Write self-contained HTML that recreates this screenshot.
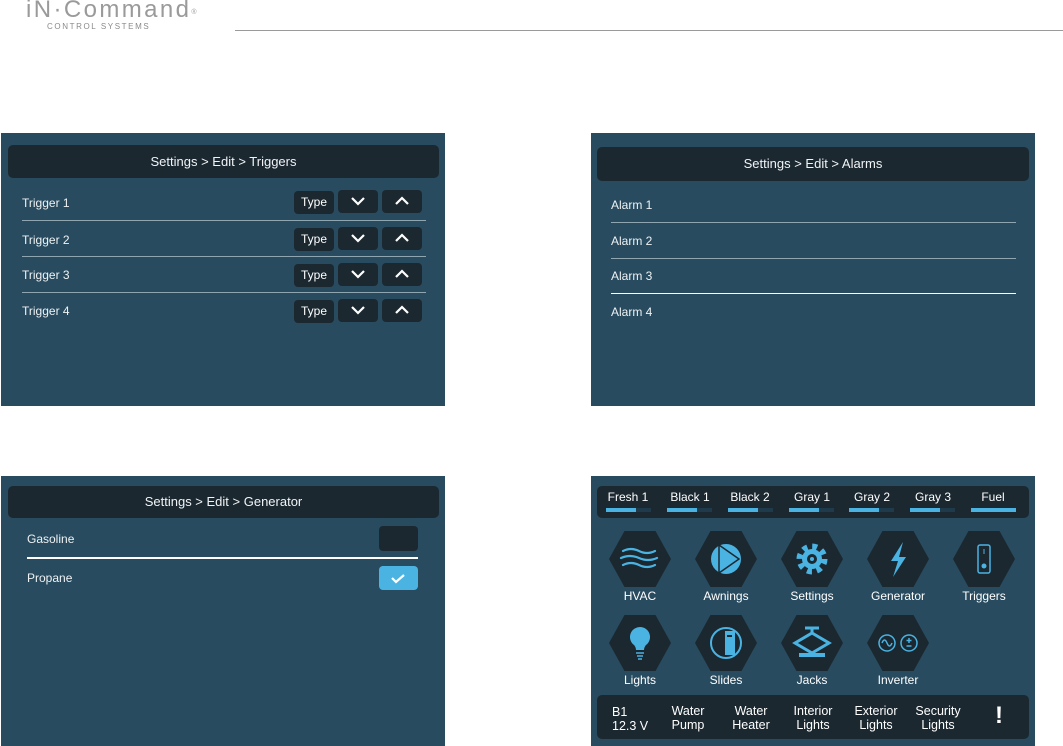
<!DOCTYPE html>
<html><head><meta charset="utf-8"><style>
*{margin:0;padding:0;box-sizing:border-box}
body{width:1063px;height:746px;background:#fff;position:relative;overflow:hidden;font-family:"Liberation Sans",sans-serif;color:#fff}
.a{position:absolute}
.p{position:absolute;background:#284b5f}
.h{position:absolute;background:#1b2830;border-radius:5px;font-size:13px;text-align:center;color:#f0f4f6}
.t{position:absolute;font-size:12px;color:#eef2f4}
.ln{position:absolute;height:1px;background:#8fa5b0}
.b{position:absolute;background:#1b2830;border-radius:4px;height:23px;font-size:12px;text-align:center;line-height:23px}
.b svg{position:absolute;left:13px;top:5px}
.hex{position:absolute;width:62px;height:56px;background:#1b2830;clip-path:polygon(25% 0,75% 0,100% 50%,75% 100%,25% 100%,0 50%)}
.lb{position:absolute;font-size:12px;text-align:center;width:80px}
.tk{position:absolute;font-size:12px;text-align:center;width:60px}
.bar{position:absolute;height:4px;width:45px;background:#1f3a4a}
.bar i{display:block;height:4px;background:#4ab3e2}
.bt{position:absolute;font-size:12.5px;line-height:14px;text-align:center;width:60px}
</style></head><body>
<div class="a" style="left:26px;top:-2px;font-size:24px;line-height:24px;color:#9a9a9a;letter-spacing:2.4px">iN·Command<sup style="font-size:7px;letter-spacing:0;vertical-align:top;position:relative;top:3px">®</sup></div>
<div class="a" style="left:47px;top:22px;font-size:8px;line-height:9px;color:#8a8a8a;letter-spacing:1.6px">CONTROL SYSTEMS</div>
<div class="a" style="left:235px;top:30px;width:828px;height:1px;background:#9a9a9a"></div>

<!-- P1 -->
<div class="p" style="left:1px;top:133px;width:444px;height:273px"></div>
<div class="h" style="left:8px;top:145px;width:431px;height:33px;line-height:33px">Settings &gt; Edit &gt; Triggers</div>
<div class="t" style="left:22px;top:196px">Trigger 1</div>
<div class="t" style="left:22px;top:233px">Trigger 2</div>
<div class="t" style="left:22px;top:268px">Trigger 3</div>
<div class="t" style="left:22px;top:304px">Trigger 4</div>
<div class="ln" style="left:22px;top:220px;width:404px"></div>
<div class="ln" style="left:22px;top:256px;width:404px"></div>
<div class="ln" style="left:22px;top:292px;width:404px"></div>

<div class="b" style="left:294px;top:191px;width:40px">Type</div>
<div class="b" style="left:338px;top:190px;width:40px"><svg width="14" height="12"><path d="M1 3l6 6 6-6" stroke="#fff" stroke-width="2.2" fill="none"/></svg></div>
<div class="b" style="left:382px;top:190px;width:40px"><svg width="14" height="12"><path d="M1 9l6-6 6 6" stroke="#fff" stroke-width="2.2" fill="none"/></svg></div>
<div class="b" style="left:294px;top:228px;width:40px">Type</div>
<div class="b" style="left:338px;top:227px;width:40px"><svg width="14" height="12"><path d="M1 3l6 6 6-6" stroke="#fff" stroke-width="2.2" fill="none"/></svg></div>
<div class="b" style="left:382px;top:227px;width:40px"><svg width="14" height="12"><path d="M1 9l6-6 6 6" stroke="#fff" stroke-width="2.2" fill="none"/></svg></div>
<div class="b" style="left:294px;top:264px;width:40px">Type</div>
<div class="b" style="left:338px;top:263px;width:40px"><svg width="14" height="12"><path d="M1 3l6 6 6-6" stroke="#fff" stroke-width="2.2" fill="none"/></svg></div>
<div class="b" style="left:382px;top:263px;width:40px"><svg width="14" height="12"><path d="M1 9l6-6 6 6" stroke="#fff" stroke-width="2.2" fill="none"/></svg></div>
<div class="b" style="left:294px;top:300px;width:40px">Type</div>
<div class="b" style="left:338px;top:299px;width:40px"><svg width="14" height="12"><path d="M1 3l6 6 6-6" stroke="#fff" stroke-width="2.2" fill="none"/></svg></div>
<div class="b" style="left:382px;top:299px;width:40px"><svg width="14" height="12"><path d="M1 9l6-6 6 6" stroke="#fff" stroke-width="2.2" fill="none"/></svg></div>

<!-- P2 -->
<div class="p" style="left:591px;top:133px;width:444px;height:273px"></div>
<div class="h" style="left:597px;top:147px;width:432px;height:34px;line-height:34px">Settings &gt; Edit &gt; Alarms</div>
<div class="t" style="left:611px;top:198px">Alarm 1</div>
<div class="t" style="left:611px;top:234px">Alarm 2</div>
<div class="t" style="left:611px;top:269px">Alarm 3</div>
<div class="t" style="left:611px;top:305px">Alarm 4</div>
<div class="ln" style="left:611px;top:222px;width:405px"></div>
<div class="ln" style="left:611px;top:258px;width:405px"></div>
<div class="ln" style="left:611px;top:293px;width:405px;background:#fff"></div>

<!-- P3 -->
<div class="p" style="left:1px;top:476px;width:444px;height:270px"></div>
<div class="h" style="left:8px;top:486px;width:431px;height:32px;line-height:32px">Settings &gt; Edit &gt; Generator</div>
<div class="t" style="left:27px;top:532px">Gasoline</div>
<div class="t" style="left:27px;top:571px">Propane</div>
<div class="a" style="left:379px;top:526px;width:39px;height:25px;background:#1b2830;border-radius:4px"></div>
<div class="a" style="left:27px;top:557px;width:391px;height:2px;background:#fff"></div>
<div class="a" style="left:379px;top:566px;width:39px;height:24px;background:#4ab3e2;border-radius:4px"><svg width="39" height="24"><path d="M13 12l4 4 8-7" stroke="#fff" stroke-width="2.2" fill="none"/></svg></div>

<!-- P4 -->
<div class="p" style="left:591px;top:476px;width:444px;height:270px"></div>
<div class="a" style="left:597px;top:486px;width:432px;height:32px;background:#1b2830;border-radius:5px"></div>
<div class="tk" style="left:598px;top:490px">Fresh 1</div><div class="bar" style="left:606px;top:508px"><i style="width:30px"></i></div>
<div class="tk" style="left:660px;top:490px">Black 1</div><div class="bar" style="left:667px;top:508px"><i style="width:30px"></i></div>
<div class="tk" style="left:720px;top:490px">Black 2</div><div class="bar" style="left:728px;top:508px"><i style="width:30px"></i></div>
<div class="tk" style="left:782px;top:490px">Gray 1</div><div class="bar" style="left:789px;top:508px"><i style="width:30px"></i></div>
<div class="tk" style="left:842px;top:490px">Gray 2</div><div class="bar" style="left:849px;top:508px"><i style="width:30px"></i></div>
<div class="tk" style="left:903px;top:490px">Gray 3</div><div class="bar" style="left:910px;top:508px"><i style="width:30px"></i></div>
<div class="tk" style="left:963px;top:490px">Fuel</div><div class="bar" style="left:971px;top:508px"><i style="width:45px"></i></div>

<div class="hex" style="left:609px;top:531px"></div>
<svg class="a" style="left:609px;top:531px" width="62" height="56"><g stroke="#4ab3e2" stroke-width="2.2" fill="none" stroke-linecap="round"><path d="M14 20q8-4 16 0t16 0"/><path d="M12 27q9-4 18 0t18 0"/><path d="M14 34q8-4 16 0t16 0"/></g></svg>
<div class="hex" style="left:695px;top:531px"></div>
<svg class="a" style="left:695px;top:531px" width="62" height="56"><circle cx="31" cy="28" r="15" fill="#4ab3e2"/><path d="M24 14v28M24 14l20 14-20 14" stroke="#1b2830" stroke-width="1.5" fill="none"/></svg>
<div class="hex" style="left:781px;top:531px"></div>
<svg class="a" style="left:781px;top:531px" width="62" height="56"><circle cx="31" cy="28" r="12" fill="none" stroke="#4ab3e2" stroke-width="7" stroke-dasharray="4.7 4.7"/><circle cx="31" cy="28" r="10" fill="#4ab3e2"/><circle cx="31" cy="28" r="5" fill="#1b2830"/><circle cx="31" cy="28" r="2" fill="#4ab3e2"/></svg>
<div class="hex" style="left:867px;top:531px"></div>
<svg class="a" style="left:867px;top:531px" width="62" height="56"><path d="M36 11l-12 19h7l-5 16 13-20h-7z" fill="#4ab3e2"/></svg>
<div class="hex" style="left:953px;top:531px"></div>
<svg class="a" style="left:953px;top:531px" width="62" height="56"><rect x="25" y="14" width="12" height="28" rx="2" fill="none" stroke="#4ab3e2" stroke-width="1.5"/><path d="M31 18v5" stroke="#4ab3e2"/><circle cx="31" cy="35" r="2.5" fill="#4ab3e2"/></svg>
<div class="lb" style="left:600px;top:589px">HVAC</div>
<div class="lb" style="left:686px;top:589px">Awnings</div>
<div class="lb" style="left:772px;top:589px">Settings</div>
<div class="lb" style="left:858px;top:589px">Generator</div>
<div class="lb" style="left:944px;top:589px">Triggers</div>

<div class="hex" style="left:609px;top:615px"></div>
<svg class="a" style="left:609px;top:615px" width="62" height="56"><path d="M31 12a10 10 0 0 0-6 18c1 1 2 3 2 5h8c0-2 1-4 2-5a10 10 0 0 0-6-18z" fill="#4ab3e2"/><path d="M27 38h8M28 41h6M29 44h4" stroke="#4ab3e2" stroke-width="1.5"/></svg>
<div class="hex" style="left:695px;top:615px"></div>
<svg class="a" style="left:695px;top:615px" width="62" height="56"><circle cx="31" cy="28" r="15" fill="none" stroke="#4ab3e2" stroke-width="2"/><rect x="30" y="16" width="10" height="24" fill="#4ab3e2"/><path d="M32 21h5" stroke="#1b2830" stroke-width="2"/></svg>
<div class="hex" style="left:781px;top:615px"></div>
<svg class="a" style="left:781px;top:615px" width="62" height="56"><path d="M24 13h14M31 13v4" stroke="#4ab3e2" stroke-width="3"/><path d="M14 28l17-10 17 10-17 10z" stroke="#4ab3e2" stroke-width="3" fill="none"/><rect x="18" y="38" width="26" height="4" fill="#4ab3e2"/></svg>
<div class="hex" style="left:867px;top:615px"></div>
<svg class="a" style="left:867px;top:615px" width="62" height="56"><g stroke="#4ab3e2" stroke-width="1.5" fill="none"><circle cx="20" cy="28" r="8"/><circle cx="42" cy="28" r="8"/><path d="M15 28q2.5-6 5 0t5 0"/><path d="M42 23v5M39.5 25.5h5M39.5 31h5"/></g></svg>
<div class="lb" style="left:600px;top:673px">Lights</div>
<div class="lb" style="left:686px;top:673px">Slides</div>
<div class="lb" style="left:772px;top:673px">Jacks</div>
<div class="lb" style="left:858px;top:673px">Inverter</div>

<div class="a" style="left:597px;top:695px;width:432px;height:44px;background:#1b2830;border-radius:5px"></div>
<div class="bt" style="left:612px;top:705px;text-align:left">B1<br>12.3 V</div>
<div class="bt" style="left:658px;top:704px">Water<br>Pump</div>
<div class="bt" style="left:721px;top:704px">Water<br>Heater</div>
<div class="bt" style="left:783px;top:704px">Interior<br>Lights</div>
<div class="bt" style="left:846px;top:704px">Exterior<br>Lights</div>
<div class="bt" style="left:908px;top:704px">Security<br>Lights</div>
<div class="a" style="left:989px;top:702px;width:20px;font-size:24px;font-weight:bold;text-align:center">!</div>
</body></html>
